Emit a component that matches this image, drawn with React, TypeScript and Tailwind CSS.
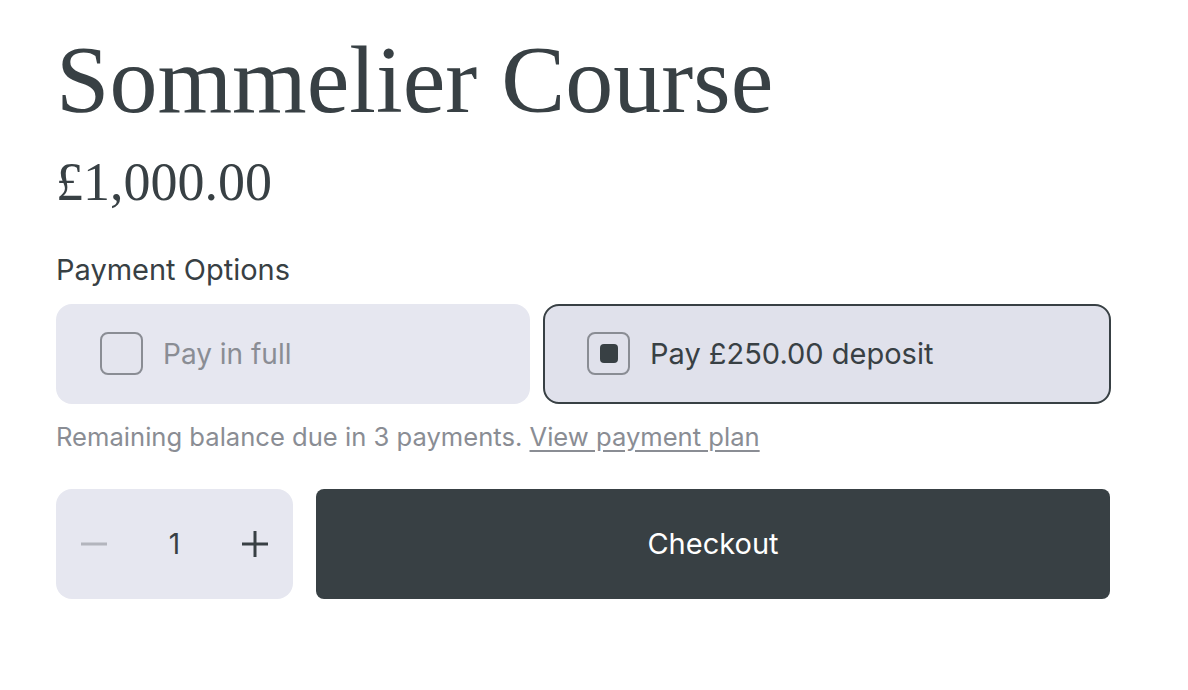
export default function App() {
  return (
    <div className="min-h-screen bg-white px-[56px] pt-[27px] text-[#384044] font-['Inter',sans-serif]">
      <h1 className="font-['Liberation_Serif',serif] text-[96px] leading-[1.1] font-normal">
        Sommelier Course
      </h1>
      <p className="mt-[22px] font-['Liberation_Serif',serif] text-[54px] leading-none">
        £1,000.00
      </p>

      <p className="mt-[46px] text-[29px] leading-none">Payment Options</p>

      <div className="mt-[20px] flex gap-[13px]">
        <label className="flex h-[100px] w-[474px] items-center gap-[20px] rounded-[16px] bg-[#e6e7f0] pl-[44px]">
          <span className="h-[43px] w-[43px] rounded-[8px] border-2 border-[#8a8d94] bg-[#e4e5ee]" />
          <span className="text-[28px] text-[#8a8d94]">Pay in full</span>
        </label>
        <label className="flex h-[100px] w-[568px] items-center gap-[20px] rounded-[16px] border-2 border-[#384044] bg-[#e0e1eb] pl-[42px]">
          <span className="flex h-[43px] w-[43px] items-center justify-center rounded-[8px] border-2 border-[#8a8d94]">
            <span className="h-[19px] w-[18px] rounded-[4px] bg-[#384044]" />
          </span>
          <span className="text-[29px]">Pay £250.00 deposit</span>
        </label>
      </div>

      <p className="mt-[20px] text-[25.6px] leading-none text-[#8a8d94]">
        Remaining balance due in 3 payments.{" "}
        <a href="#" className="underline underline-offset-4">
          View payment plan
        </a>
      </p>

      <div className="mt-[40px] flex w-[1054px] gap-[23px]">
        <div className="flex h-[110px] w-[237px] shrink-0 items-center justify-between rounded-[16px] bg-[#e6e7f0] px-[24px]">
          <svg width="28" height="28" viewBox="0 0 28 28">
            <path d="M1 14h26" stroke="#b3b5bd" strokeWidth="3" />
          </svg>
          <span className="text-[28px]">1</span>
          <svg width="28" height="28" viewBox="0 0 28 28">
            <path d="M1 14h26M14 1v26" stroke="#384044" strokeWidth="3" />
          </svg>
        </div>
        <button className="flex h-[110px] flex-1 items-center justify-center rounded-[8px] bg-[#384044] text-[29px] text-white">
          Checkout
        </button>
      </div>
    </div>
  );
}
